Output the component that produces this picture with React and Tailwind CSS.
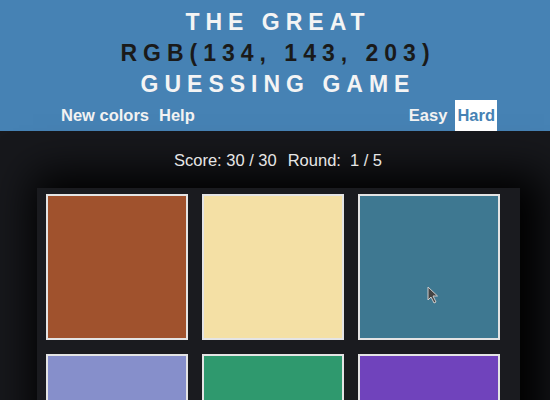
import React from "react";

const tiles = ["#a0522d", "#f4e0a5", "#3e7891", "#868fcb", "#2f996e", "#7043bc"];

export default function App() {
  return (
    <div className="relative w-[550px] h-[400px] overflow-hidden bg-[#17181c]" style={{ fontFamily: '"Liberation Sans", Arial, sans-serif' }}>
      <header className="bg-[#4682b4] h-[131px] pt-[7px] flex flex-col">
        <h1 className="text-center font-bold text-[23px] leading-[31px] tracking-[6px] pl-[6px] text-[#f4f4f4]">
          <div>THE GREAT</div>
          <div className="text-[#1a1a1a]">RGB(134, 143, 203)</div>
          <div>GUESSING GAME</div>
        </h1>
        <nav className="flex justify-between items-stretch h-[31px] pl-[58px] pr-[53px] text-[16.5px] font-bold text-[#f2f2f2]">
          <div className="flex items-center gap-[4px]">
            <span className="px-[3px]">New colors</span>
            <span className="px-[3px]">Help</span>
          </div>
          <div className="flex items-stretch gap-[5px]">
            <span className="px-[3px] flex items-center">Easy</span>
            <span className="px-[2px] flex items-center bg-white text-[#4682b4]">Hard</span>
          </div>
        </nav>
      </header>
      <div className="flex justify-center mt-[17px] pl-[6px] text-[16.5px] leading-[24px] text-[#e6e6e6]">
        <span>Score: 30 / 30</span>
        <span className="ml-[11px]">Round:</span>
        <span className="ml-[9px]">1 / 5</span>
      </div>
      <div className="ml-[37px] mt-[16px] w-[483px] h-[260px] bg-[#1a1b1f] pt-[6px] pl-[9px] shadow-[10px_0_40px_14px_#000]">
        <div className="grid grid-cols-[142px_142px_142px] gap-[14px]">
          {tiles.map((c) => (
            <div key={c} className="h-[146px] border-2 border-[#e4e4e4]" style={{ backgroundColor: c }} />
          ))}
        </div>
      </div>
      <svg className="absolute left-[427px] top-[286px]" width="12" height="18" viewBox="0 0 12 18">
        <path d="M1 1 L1 14 L4 11 L7 17 L9 16 L6 10 L10.5 10 Z" fill="#444" stroke="#ccc" strokeWidth="1" strokeLinejoin="round" />
      </svg>
    </div>
  );
}
